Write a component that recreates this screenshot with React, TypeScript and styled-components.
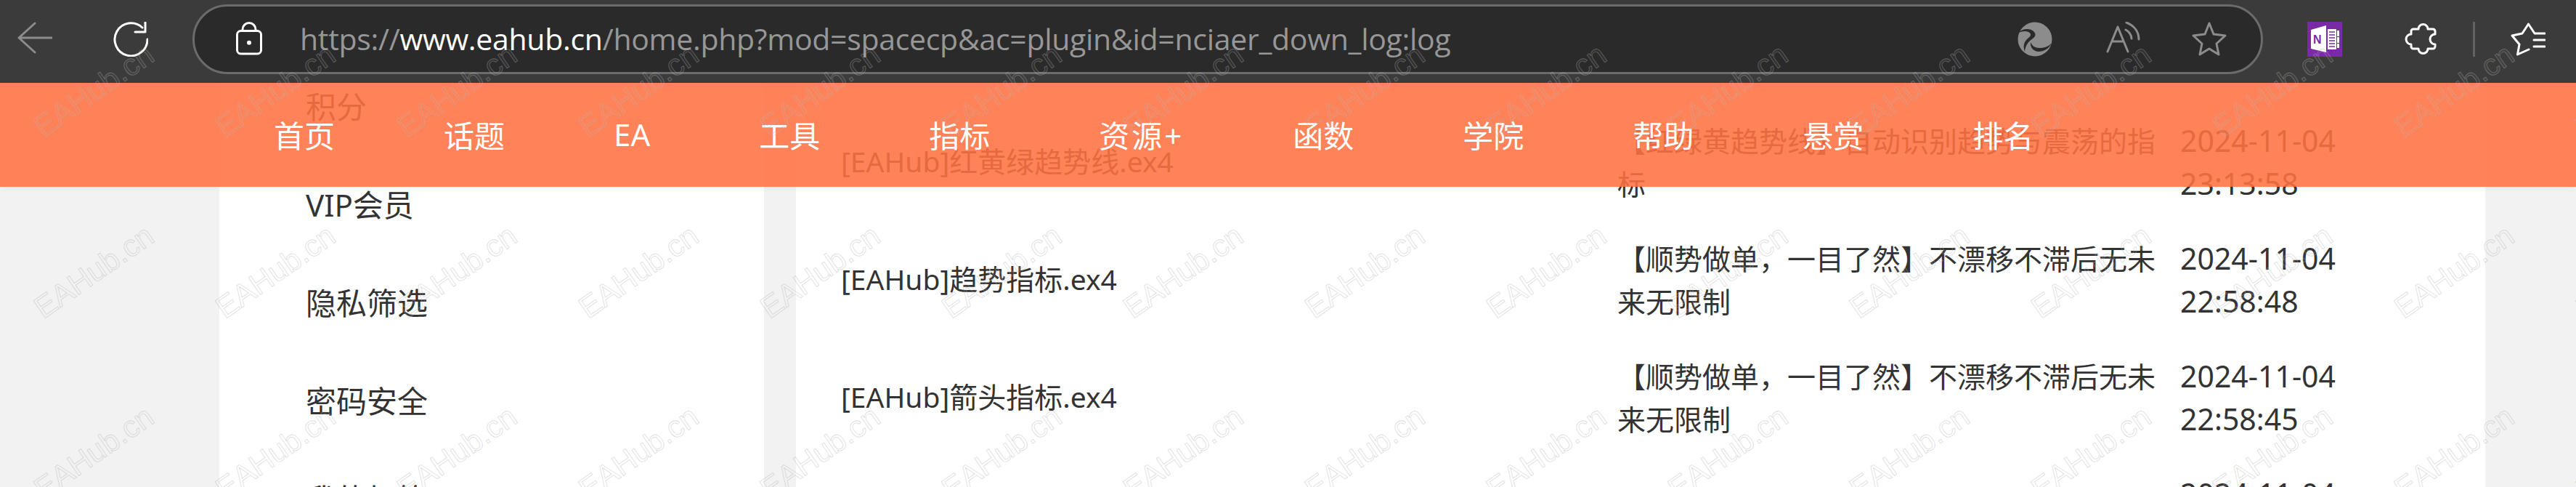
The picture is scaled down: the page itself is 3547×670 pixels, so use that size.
import React from 'react';
import styled, { createGlobalStyle } from 'styled-components';

const Global = createGlobalStyle`
  html, body { margin: 0; padding: 0; background: #f2f2f2; }
  body { font-family: "Noto Sans", "Noto Sans CJK SC", sans-serif; color: #333; }
  * { box-sizing: border-box; }
`;

const Page = styled.div`
  position: relative;
  width: 3547px;
  height: 670px;
  overflow: hidden;
  background: #f2f2f2;
`;

const BrowserBar = styled.header`
  position: relative;
  z-index: 1;
  height: 114px;
  padding: 0 0 6px 24px;
  display: flex;
  align-items: center;
  background: #3b3b3b;
`;

const Icon = styled.svg<{ $left?: number; $w?: number }>`
  flex: none;
  display: block;
  width: ${p => p.$w ?? 48}px;
  height: 48px;
  margin-left: ${p => p.$left ?? 0}px;
  fill: none;
  stroke-width: 3;
  stroke-linecap: round;
  stroke-linejoin: round;
`;

const AddressBar = styled.div`
  flex: none;
  width: 2851px;
  height: 96px;
  margin-left: 61px;
  padding: 0 47px 0 57px;
  display: flex;
  align-items: center;
  background: #2a2a2a;
  border: 3px solid #6b6b6b;
  border-radius: 48px;
`;

const Url = styled.div`
  flex: 1;
  margin: 0 0 3px 52px;
  font-family: "Open Sans", "Noto Sans", sans-serif;
  font-size: 41px;
  letter-spacing: -0.3px;
  white-space: nowrap;
  color: #979797;
`;

const Host = styled.span`
  color: #fff;
`;

const Divider = styled.div`
  flex: none;
  width: 3px;
  height: 48px;
  margin-left: 48px;
  background: #636363;
`;

const Viewport = styled.div`
  display: flex;
  align-items: flex-start;
  margin-top: -35px;
  padding-left: 302px;
  gap: 44px;
`;

const Sidebar = styled.nav`
  flex: none;
  width: 750px;
  background: #fff;
  height: 700px;
`;

const SideItem = styled.div`
  height: 135px;
  padding: 0 0 4px 119px;
  display: flex;
  align-items: center;
  font-size: 42px;
`;

const Main = styled.main`
  flex: none;
  width: 2326px;
  height: 700px;
  padding-top: 63px;
  background: #fff;
`;

const Row = styled.div`
  display: grid;
  grid-template-columns: 1069px 775px 260px;
  align-items: center;
  min-height: 162px;
  padding-left: 62px;
  font-size: 39px;
  line-height: 59px;
`;

const NameCell = styled.div`
  padding-bottom: 4px;
`;

const DateCell = styled.div`
  font-size: 41px;
`;

const TopNav = styled.nav`
  position: absolute;
  z-index: 2;
  top: 114px;
  left: 0;
  right: 0;
  height: 143px;
  padding: 0 0 2px 302px;
  display: flex;
  align-items: center;
  background: rgba(255, 113, 65, 0.88);
  box-shadow: 0 2px 8px rgba(0, 0, 0, 0.05);
`;

const NavLink = styled.a<{ $tracking?: number }>`
  padding: 0 75px;
  font-size: 42px;
  letter-spacing: ${p => p.$tracking ?? 0}px;
  color: #fff;
  white-space: nowrap;
`;

const WatermarkLayer = styled.div`
  position: absolute;
  z-index: 3;
  inset: 0;
  padding-left: 4px;
  display: grid;
  grid-template-columns: repeat(15, 250px);
  grid-auto-rows: 249px;
  pointer-events: none;
`;

const Watermark = styled.div`
  display: flex;
  align-items: center;
  justify-content: center;
  font-family: "Liberation Sans", Arial, sans-serif;
  font-size: 42px;
  white-space: nowrap;
  color: rgba(255, 255, 255, 0.04);
  -webkit-text-stroke: 0.9px rgba(175, 175, 175, 0.42);
  transform: rotate(-35deg);
`;

const nav = ['首页', '话题', 'EA', '工具', '指标', '资源+', '函数', '学院', '帮助', '悬赏', '排名'];
const side = ['积分', 'VIP会员', '隐私筛选', '密码安全', '我的标签'];
const trend = '【顺势做单，一目了然】不漂移不滞后无未来无限制';
const rows = [
  { name: '[EAHub]红黄绿趋势线.ex4', desc: '【红绿黄趋势线】自动识别趋势与震荡的指标', date: '2024-11-04 23:13:58' },
  { name: '[EAHub]趋势指标.ex4', desc: trend, date: '2024-11-04 22:58:48' },
  { name: '[EAHub]箭头指标.ex4', desc: trend, date: '2024-11-04 22:58:45' },
  { name: '[EAHub]波段指标.ex4', desc: '波段指标', date: '2024-11-04 22:58:41' },
];

export default function App() {
  return (
    <Page>
      <Global />
      <BrowserBar>
        <Icon viewBox="0 0 48 48" stroke="#8c8c8c">
          <path d="M47 22H2M24 2 2 22 24 42" />
        </Icon>
        <Icon viewBox="0 0 48 48" stroke="#fff" $left={84}>
          <path d="M47 24A22.5 22.5 0 1 1 40 8" />
          <path d="M44 1V14H30" />
        </Icon>
        <AddressBar>
          <Icon viewBox="0 0 36 48" stroke="#fff" $w={36}>
            <rect x="1.5" y="12.5" width="33" height="31.5" rx="5" />
            <path d="M9 12V10.5a9 9 0 0 1 18 0V12" />
            <circle cx="18" cy="28.7" r="3" fill="#fff" stroke="none" />
          </Icon>
          <Url>
            https://<Host>www.eahub.cn</Host>/home.php?mod=spacecp&amp;ac=plugin&amp;id=nciaer_down_log:log
          </Url>
          <Icon viewBox="0 0 48 48" stroke="none">
            <circle cx="24" cy="24" r="23.5" fill="#8c8c8c" />
            <path fill="#2a2a2a" d="M1 15C6 10 16 8 22 13C26 17 25 20 21 23C15 27 11 32 10 41C7 33 9 27 15 22C19 19 19 16 15 14C11 12 6 13 1 15Z" />
            <path fill="#2a2a2a" d="M18 28C20 33 24 36 30 36C36 36 42 35 47 29C44 37 36 41 29 41C23 41 17 36 18 28Z" />
          </Icon>
          <Icon viewBox="0 0 48 48" stroke="#8c8c8c" $left={74}>
            <path d="M2 41 16 7 30 41M8 27H24" />
            <path d="M28 1C38 5 45 13 45 24M27 11C31 13 35 18 35 23" />
          </Icon>
          <Icon viewBox="0 0 48 48" stroke="#8c8c8c" $left={70}>
            <path d="M24 2 30 17 46 19 34 30 37 45 24 37 11 45 14 30 2 19 18 17Z" />
          </Icon>
        </AddressBar>
        <Icon viewBox="0 0 48 48" stroke="none" $left={61}>
          <rect width="48" height="48" fill="#7b2aa5" />
          <path fill="#fff" d="M5 11 26 5V42L5 37Z" />
          <rect x="28" y="10" width="12" height="28" fill="#fff" />
          <path stroke="#7b2aa5" strokeWidth="1.6" strokeLinecap="butt" d="M30 14H38M30 18H38M30 22H38M30 26H38M30 30H38M30 34H38" />
          <path fill="#fff" d="M41 12h3v8h-3zM41 21h3v8h-3zM41 30h3v6h-3z" />
          <text x="8" y="30" fontFamily="Liberation Sans, sans-serif" fontSize="16" fontWeight="700" fill="#7b2aa5">N</text>
        </Icon>
        <Icon viewBox="0 0 48 48" stroke="#fff" $left={84}>
          <path d="M11 13a3 3 0 0 1 3-3H21a6.5 6.5 0 1 1 13 0H41a3 3 0 0 1 3 3V17a7 7 0 0 0 0 14V34a3 3 0 0 1-3 3H34a6.5 6.5 0 0 1-13 0H14a3 3 0 0 1-3-3V31a7 7 0 0 1 0-14Z" />
        </Icon>
        <Divider />
        <Icon viewBox="0 0 48 48" stroke="#fff" $left={49}>
          <path d="M47 16H33L24.5 3 16 16 2 19 12 31 9.5 45 25 38" />
          <path d="M32 25H47M32 34H47" />
        </Icon>
      </BrowserBar>

      <Viewport>
        <Sidebar>
          {side.map(s => <SideItem key={s}>{s}</SideItem>)}
        </Sidebar>
        <Main>
          {rows.map(r => (
            <Row key={r.name}>
              <NameCell>{r.name}</NameCell>
              <div>{r.desc}</div>
              <DateCell>{r.date}</DateCell>
            </Row>
          ))}
        </Main>
      </Viewport>

      <TopNav>
        {nav.map(n => <NavLink key={n} $tracking={n === '资源+' ? 3 : 0}>{n}</NavLink>)}
      </TopNav>

      <WatermarkLayer>
        {Array.from({ length: 45 }, (_, i) => <Watermark key={i}>EAHub.cn</Watermark>)}
      </WatermarkLayer>
    </Page>
  );
}
